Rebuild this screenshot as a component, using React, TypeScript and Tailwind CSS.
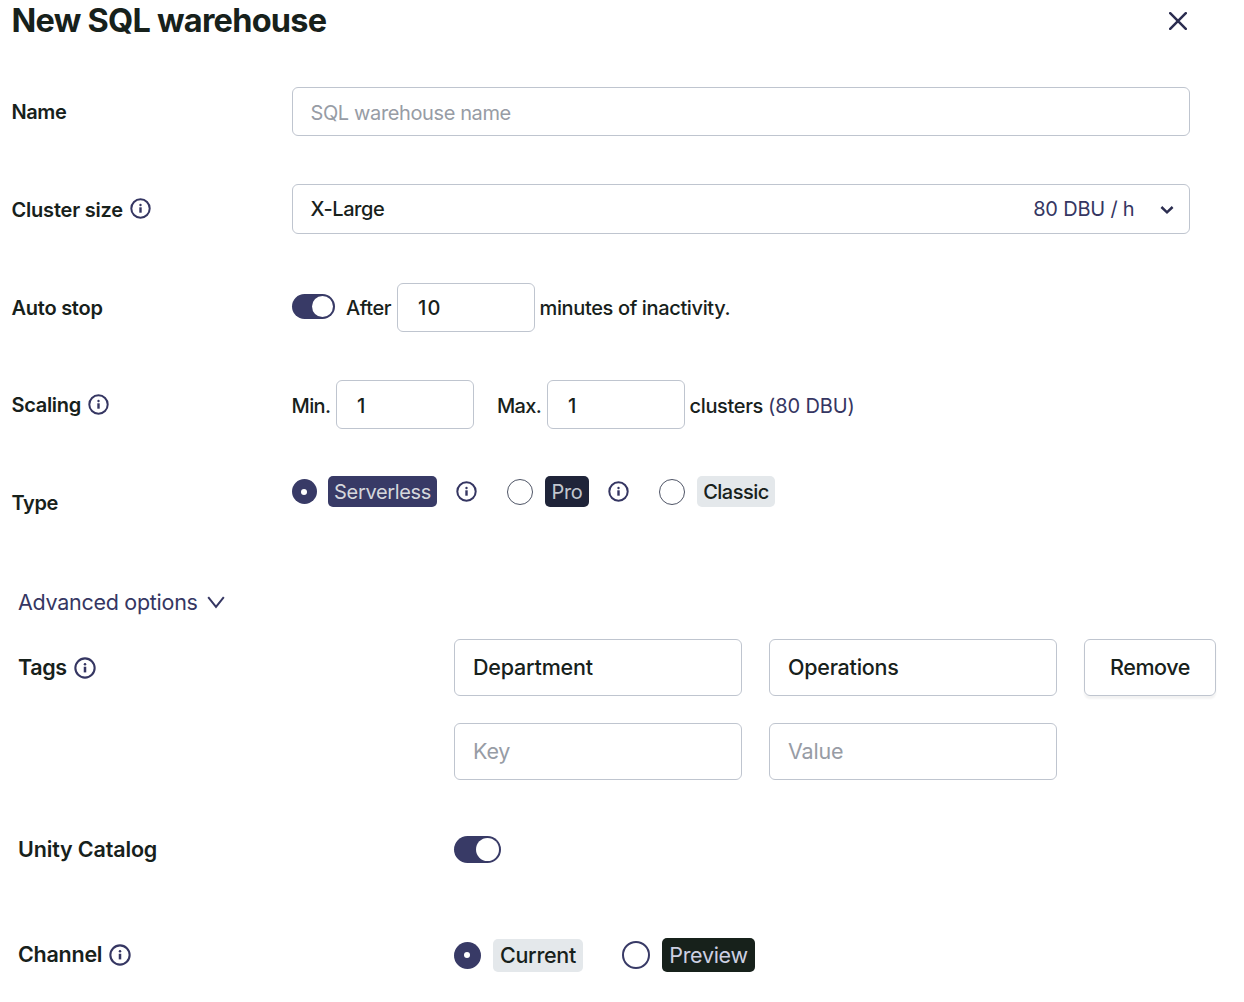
import React from "react";

function Info({ className = "" }: { className?: string }) {
  return (
    <svg viewBox="0 0 21 21" fill="none" className={"shrink-0 text-[#353662] " + className}>
      <circle cx="10.5" cy="10.5" r="9.2" stroke="currentColor" strokeWidth="2" />
      <circle cx="10.5" cy="7" r="1.2" fill="currentColor" />
      <path d="M10.5 9.3v5.400" stroke="currentColor" strokeWidth="2.4" />
    </svg>
  );
}

function Label({
  text,
  info = false,
  large = false,
  className = "",
}: {
  text: string;
  info?: boolean;
  large?: boolean;
  className?: string;
}) {
  return (
    <div className={"flex shrink-0 items-center font-semibold " + className}>
      <span>{text}</span>
      {info && <Info className={large ? "ml-[7px] size-[22px]" : "mb-[2px] ml-[7px] size-[21px]"} />}
    </div>
  );
}

function Field({ value, placeholder = false, className = "" }: { value: string; placeholder?: boolean; className?: string }) {
  return (
    <div
      className={
        "flex shrink-0 items-center rounded-[6px] border border-[#bfc5cf] bg-white " +
        (placeholder ? "text-[#979ca5] " : "font-medium ") +
        className
      }
    >
      {value}
    </div>
  );
}

function Toggle({ large = false }: { large?: boolean }) {
  return (
    <div
      className={
        "-ml-[0.5px] flex shrink-0 items-center justify-end rounded-full bg-[#383a66] " +
        (large ? "h-[27px] w-[47px] pr-[2px]" : "mb-[2px] h-[25px] w-[43px] pr-[1.5px]")
      }
    >
      <div className={"rounded-full bg-white " + (large ? "size-[23px]" : "size-[21.5px]")} />
    </div>
  );
}

function Radio({ checked = false, className }: { checked?: boolean; className: string }) {
  return (
    <div
      className={
        "flex shrink-0 items-center justify-center rounded-full " +
        (checked ? "bg-[#383a66] " : "bg-white ") +
        className
      }
    >
      {checked && <div className="size-[6px] rounded-full bg-white" />}
    </div>
  );
}

function Badge({ text, className }: { text: string; className: string }) {
  return <div className={"flex shrink-0 items-center justify-center rounded-[5px] " + className}>{text}</div>;
}

export default function App() {
  return (
    <div className="h-[1002px] w-[1244px] overflow-hidden bg-white font-['Inter',sans-serif] text-[20px] leading-none whitespace-nowrap text-[#17211b]">
      <header className="flex h-[42px] items-center justify-between pr-[57px] pl-[11.5px]">
        <h1 className="text-[32.5px] leading-[42px] font-bold tracking-[-0.76px]">New SQL warehouse</h1>
        <svg viewBox="0 0 18 18" className="size-[18px]" fill="none" stroke="#2b2d50" strokeWidth="2.5" strokeLinecap="round">
          <path d="M1.2 1.2l15.600 15.600M16.800 1.200L1.200 16.800" />
        </svg>
      </header>

      <section className="flex flex-col pl-[11.5px]">
        <div className="mt-[45px] flex h-[49px] items-center">
          <Label text="Name" className="w-[280.5px] tracking-[-0.4px]" />
          <Field value="SQL warehouse name" placeholder className="h-[49px] w-[898px] pt-[2px] pl-[17.5px] tracking-[-0.38px]" />
        </div>

        <div className="mt-[48px] flex h-[50px] items-center">
          <Label text="Cluster size" info className="w-[280.5px] pt-px tracking-[-0.2px]" />
          <div className="flex h-[50px] w-[898px] items-center rounded-[6px] border border-[#bfc5cf] pr-[15px] pl-[17.5px]">
            <span className="font-medium tracking-[-0.4px]">X-Large</span>
            <span className="ml-auto tracking-[-0.2px] text-[#353662]">80 DBU / h</span>
            <svg viewBox="0 0 14 10" className="mt-[2px] ml-[25.5px] h-[10px] w-[14px]" fill="none" stroke="#2b2d50" strokeWidth="2.5">
              <path d="M1.400 2l5.600 5.300L12.600 2" />
            </svg>
          </div>
        </div>

        <div className="mt-[49px] flex h-[49px] items-center font-medium">
          <Label text="Auto stop" className="w-[280.5px] tracking-[-0.25px]" />
          <Toggle />
          <span className="w-[62.5px] pt-px pl-[11.5px] tracking-[-0.4px]">After</span>
          <Field value="10" className="h-[49px] w-[138px] pt-px pl-[20px] tracking-[1.2px]" />
          <span className="pt-px pl-[4.5px] tracking-[-0.36px]">minutes of inactivity.</span>
        </div>

        <div className="mt-[48px] flex h-[49px] items-center font-medium">
          <Label text="Scaling" info className="w-[280px] pt-px tracking-[-0.3px]" />
          <span className="w-[44.5px] pt-[2px] tracking-[-0.6px]">Min.</span>
          <Field value="1" className="h-[49px] w-[138px] pt-[2px] pl-[20px]" />
          <span className="w-[73px] pt-[2px] pl-[23px] tracking-[-0.7px]">Max.</span>
          <Field value="1" className="h-[49px] w-[138px] pt-[2px] pl-[20px]" />
          <span className="w-[83px] pt-[2px] pl-[4.5px] tracking-[-0.35px]">clusters</span>
          <span className="pt-[2px] font-normal tracking-[-0.1px] text-[#353662]">(80 DBU)</span>
        </div>

        <div className="mt-[47px] flex h-[56px] items-start">
          <Label text="Type" className="mt-[17px] w-[280px] tracking-[-0.4px]" />
          <div className="flex h-[31px] items-center">
            <Radio checked className="size-[25px]" />
            <Badge text="Serverless" className="ml-[11.5px] h-[31px] w-[109px] bg-[#383a66] tracking-[-0.35px] text-[#d5d7dc]" />
            <Info className="ml-[19px] size-[21px]" />
            <Radio className="ml-[30px] size-[26px] border border-[#4f5566]" />
            <Badge text="Pro" className="ml-[12px] h-[31px] w-[44px] bg-[#1f2439] tracking-[-0.3px] text-[#c3c7cf]" />
            <Info className="ml-[19px] size-[21px]" />
            <Radio className="ml-[30px] size-[26px] border border-[#4f5566]" />
            <Badge text="Classic" className="ml-[12px] h-[31px] w-[78px] bg-[#e4e8eb] font-medium tracking-[-0.5px]" />
          </div>
        </div>
      </section>

      <section className="flex flex-col pl-[18px] text-[21.5px]">
        <div className="mt-[58px] flex h-[26px] items-center text-[#353662]">
          <span className="tracking-[-0.28px]">Advanced options</span>
          <svg viewBox="0 0 18 13" className="mb-[2px] ml-[9px] h-[13px] w-[18px]" fill="none" stroke="currentColor" strokeWidth="2">
            <path d="M1.200 1.200L9 10.800l7.800-9.600" />
          </svg>
        </div>

        <div className="mt-[23px] flex items-start">
          <Label text="Tags" info large className="h-[57px] w-[436px] tracking-[-0.4px]" />
          <div className="grid grid-cols-[288px_288px_132px] gap-x-[27px] gap-y-[27px]">
            <Field value="Department" className="h-[57px] pt-px pl-[18px] tracking-[-0.2px]" />
            <Field value="Operations" className="h-[57px] pt-px pl-[18px] tracking-[-0.25px]" />
            <button className="flex h-[57px] items-center justify-center rounded-[6px] border border-[#bfc5cf] pt-px font-medium tracking-[-0.45px] shadow-[0_3px_2px_rgba(0,0,0,0.05)]">
              Remove
            </button>
            <Field value="Key" placeholder className="h-[57px] pl-[18px] tracking-[-0.2px]" />
            <Field value="Value" placeholder className="h-[57px] pl-[18px] tracking-[-0.2px]" />
          </div>
        </div>

        <div className="mt-[55px] flex h-[28px] items-center">
          <Label text="Unity Catalog" className="w-[436px] pt-px tracking-[-0.15px]" />
          <Toggle large />
        </div>

        <div className="mt-[75px] flex h-[34px] items-center">
          <Label text="Channel" info large className="w-[435.5px] tracking-[-0.25px]" />
          <Radio checked className="size-[27px]" />
          <Badge text="Current" className="ml-[12.5px] h-[33px] w-[90px] bg-[#e4e8eb] pt-px font-medium tracking-[-0.3px]" />
          <Radio className="ml-[39px] size-[28px] border-[2px] border-[#383a66]" />
          <Badge text="Preview" className="ml-[12px] h-[34px] w-[93px] bg-[#17211b] pt-px tracking-[-0.3px] text-[#cdd0e2]" />
        </div>
      </section>
    </div>
  );
}
